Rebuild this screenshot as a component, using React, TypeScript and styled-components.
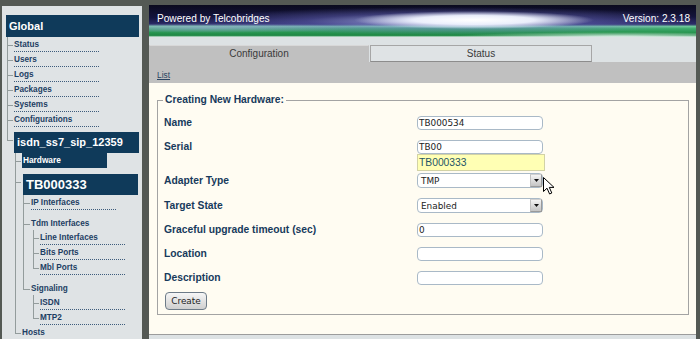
import React from 'react'
import styled, { createGlobalStyle } from 'styled-components'

type BoxKind = 'host' | 'page' | 'adapter'

const App: React.FC = () => {
  return (
    <>
      <GlobalStyle />
      <Page>
        <Sidebar>
          <GlobalBox>Global</GlobalBox>
          <Tree $offset={1}>
            <Node $indent={7} $tick={8}><Leaf href='#'>Status</Leaf></Node>
            <Node $indent={7} $tick={8}><Leaf href='#'>Users</Leaf></Node>
            <Node $indent={7} $tick={8}><Leaf href='#'>Logs</Leaf></Node>
            <Node $indent={7} $tick={8}><Leaf href='#'>Packages</Leaf></Node>
            <Node $indent={7} $tick={8}><Leaf href='#'>Systems</Leaf></Node>
            <Node $indent={7} $tick={8}><Leaf href='#'>Configurations</Leaf></Node>
            <Node $indent={7} $tick={13}>
              <NavBox $kind='host'>isdn_ss7_sip_12359</NavBox>
              <Tree $offset={1}>
                <Node $indent={7} $tick={8}>
                  <NavBox $kind='page'>Hardware</NavBox>
                </Node>
                <Node $indent={7} $tick={14}>
                  <NavBox $kind='adapter'>TB000333</NavBox>
                  <Tree $offset={1}>
                    <Node $indent={8} $tick={8}><Leaf href='#'>IP Interfaces</Leaf></Node>
                    <Node $indent={8} $tick={14}>
                      <Branch $gap={6}>Tdm Interfaces</Branch>
                      <Tree $offset={2}>
                        <Node $indent={7} $tick={8}><Leaf href='#'>Line Interfaces</Leaf></Node>
                        <Node $indent={7} $tick={8}><Leaf href='#'>Bits Ports</Leaf></Node>
                        <Node $indent={7} $tick={8}><Leaf href='#'>Mbl Ports</Leaf></Node>
                      </Tree>
                    </Node>
                    <Node $indent={8} $tick={14}>
                      <Branch $gap={6}>Signaling</Branch>
                      <Tree $offset={2}>
                        <Node $indent={7} $tick={8}><Leaf href='#'>ISDN</Leaf></Node>
                        <Node $indent={7} $tick={8}><Leaf href='#'>MTP2</Leaf></Node>
                      </Tree>
                    </Node>
                  </Tree>
                </Node>
                <Node $indent={7} $tick={8}>
                  <Branch $gap={0}>Hosts</Branch>
                </Node>
              </Tree>
            </Node>
          </Tree>
        </Sidebar>

        <Main>
          <Header>
            <HeaderText>Powered by Telcobridges</HeaderText>
            <HeaderText>Version: 2.3.18</HeaderText>
          </Header>
          <TabStrip>
            <Tab $active>Configuration</Tab>
            <Tab>Status</Tab>
          </TabStrip>
          <SubBar>
            <SubLink href='#'>List</SubLink>
          </SubBar>

          <Content>
            <Fieldset>
              <Legend>Creating New Hardware:</Legend>
              <Rows>
                <Row>
                  <Label $h={14}>Name</Label>
                  <TextInput readOnly value='TB000534' />
                </Row>
                <Row>
                  <Label $h={14}>Serial</Label>
                  <FieldWrap $extra={9}>
                    <TextInput readOnly value='TB00' />
                    <Suggestion>TB000333</Suggestion>
                  </FieldWrap>
                </Row>
                <Row>
                  <Label $h={15}>Adapter Type</Label>
                  <FieldWrap $extra={0}>
                    <SelectBox>
                      <span>TMP</span>
                      <ArrowButton><Triangle /></ArrowButton>
                    </SelectBox>
                    <Cursor width='12' height='18' viewBox='0 0 12 18'>
                      <path d='M0.5 0.5 L0.5 14.5 L4 11.2 L6.6 17 L8.8 16 L6.3 10.4 L11 10.4 Z' fill='#fff' stroke='#000' strokeWidth='1' strokeLinejoin='round' />
                    </Cursor>
                  </FieldWrap>
                </Row>
                <Row>
                  <Label $h={15}>Target State</Label>
                  <SelectBox>
                    <span>Enabled</span>
                    <ArrowButton><Triangle /></ArrowButton>
                  </SelectBox>
                </Row>
                <Row>
                  <Label $h={14}>Graceful upgrade timeout (sec)</Label>
                  <TextInput readOnly value='0' />
                </Row>
                <Row>
                  <Label $h={14}>Location</Label>
                  <TextInput readOnly value='' />
                </Row>
                <Row>
                  <Label $h={14}>Description</Label>
                  <TextInput readOnly value='' />
                </Row>
                <CreateButton type='button'>Create</CreateButton>
              </Rows>
            </Fieldset>
          </Content>
          <Footer />
        </Main>
      </Page>
    </>
  )
}

const Triangle = () => (
  <svg width='5' height='3' viewBox='0 0 5 3'>
    <polygon points='0,0 5,0 2.5,3' fill='#111' />
  </svg>
)

const GlobalStyle = createGlobalStyle`
  html, body {
    margin: 0;
    padding: 0;
    background: #545954;
    overflow: hidden;
  }
  body {
    font-family: 'Liberation Sans', Arial, sans-serif;
  }
  * {
    box-sizing: border-box;
  }
`

const Page = styled.div`
  display: flex;
  gap: 7px;
  height: 339px;
  padding: 5px 4px 0 2px;
  overflow: hidden;
`

// left navigation tree
const Sidebar = styled.div`
  width: 140px;
  flex-shrink: 0;
  margin-top: 1px;
  padding: 9px 3px 0 4px;
  background: #dfe3e5;
  overflow: hidden;
`

const GlobalBox = styled.div`
  height: 22px;
  padding-left: 3px;
  background: #0f3a5a;
  color: #fff;
  font-weight: bold;
  font-size: 11px;
  line-height: 22px;
`

const Tree = styled.ul<{ $offset: number }>`
  list-style: none;
  margin: 0 0 0 ${({ $offset }) => $offset}px;
  padding: 0;
`

const Node = styled.li<{ $indent: number; $tick: number }>`
  display: flow-root;
  position: relative;
  padding-left: ${({ $indent }) => $indent}px;

  &::before {
    content: '';
    position: absolute;
    left: 0;
    top: 0;
    width: ${({ $indent }) => $indent - 2}px;
    height: ${({ $tick }) => $tick}px;
    border-left: 1px solid #939c9c;
    border-bottom: 1px solid #939c9c;
  }

  &:not(:last-child)::after {
    content: '';
    position: absolute;
    left: 0;
    top: 0;
    bottom: 0;
    border-left: 1px solid #939c9c;
  }
`

const Leaf = styled.a`
  display: block;
  width: 85px;
  padding-top: 1px;
  line-height: 13px;
  font-size: 8.2px;
  font-weight: bold;
  color: #1d3e63;
  text-decoration: none;
  border-bottom: 1px dotted #3d5c7c;
`

const Branch = styled.span<{ $gap: number }>`
  display: block;
  padding-top: ${({ $gap }) => $gap + 1}px;
  line-height: 13px;
  font-size: 8.2px;
  font-weight: bold;
  color: #1d3e63;
`

const boxSizes: Record<BoxKind, { w: number; h: number; fs: number; pl: number; mt: number; ml: number }> = {
  host: { w: 125, h: 21, fs: 11, pl: 3, mt: 5, ml: 0 },
  page: { w: 85, h: 15, fs: 8.3, pl: 1, mt: 0, ml: 0 },
  adapter: { w: 115, h: 21, fs: 13, pl: 3, mt: 6, ml: 1 },
}

const NavBox = styled.div<{ $kind: BoxKind }>`
  width: ${({ $kind }) => boxSizes[$kind].w}px;
  height: ${({ $kind }) => boxSizes[$kind].h}px;
  margin: ${({ $kind }) => boxSizes[$kind].mt}px 0 0 ${({ $kind }) => boxSizes[$kind].ml}px;
  padding-left: ${({ $kind }) => boxSizes[$kind].pl}px;
  background: #0f3a5a;
  color: #fff;
  font-weight: bold;
  font-size: ${({ $kind }) => boxSizes[$kind].fs}px;
  line-height: ${({ $kind }) => boxSizes[$kind].h}px;
  white-space: nowrap;
`

// main panel
const Main = styled.div`
  flex: 1;
  display: flex;
  flex-direction: column;
  min-width: 0;
`

const Header = styled.div`
  height: 32px;
  display: flex;
  justify-content: space-between;
  align-items: flex-start;
  padding: 8px 6px 0 8px;
  background:
    radial-gradient(ellipse 120px 9px at 325px 15px, rgba(255, 255, 255, 1) 0%, rgba(240, 244, 255, 0.95) 50%, rgba(170, 180, 245, 0) 100%),
    radial-gradient(ellipse 260px 14px at 300px 16px, rgba(190, 200, 250, 0.85) 0%, rgba(120, 120, 210, 0.4) 55%, rgba(60, 60, 140, 0) 100%),
    radial-gradient(ellipse 150px 5px at 60px 23px, rgba(160, 160, 225, 0.6), rgba(150, 150, 220, 0) 100%),
    radial-gradient(ellipse 160px 4px at 470px 31px, rgba(230, 245, 240, 0.8), rgba(230, 245, 240, 0) 100%),
    linear-gradient(180deg, #0a0a1e 0%, #14143e 40%, #2a2a66 60%, #6ec89a 67%, #3eaa6c 74%, #27954f 86%, #1f8744 95%, #cfe6da 100%);
`

const HeaderText = styled.span`
  font-size: 10.1px;
  line-height: 12px;
  color: #fff;
`

const TabStrip = styled.div`
  height: 25px;
  display: flex;
  align-items: flex-end;
  padding-top: 8px;
  background: #dde2e4;
`

const Tab = styled.div<{ $active?: boolean }>`
  width: ${({ $active }) => ($active ? 220 : 222)}px;
  height: 17px;
  margin-left: ${({ $active }) => ($active ? 0 : 1)}px;
  background: ${({ $active }) => ($active ? '#c0c0c0' : '#dfe3e5')};
  border: 1px solid ${({ $active }) => ($active ? '#c0c0c0' : '#a6a6a6')};
  border-top-color: ${({ $active }) => ($active ? '#d8d8d8' : '#a6a6a6')};
  border-bottom-color: ${({ $active }) => ($active ? '#c0c0c0' : '#8c8c8c')};
  text-align: center;
  font-size: 10px;
  line-height: 15px;
  color: #3a3a3a;
`

const SubBar = styled.div`
  height: 21px;
  padding-left: 8px;
  background: #c0c0c0;
  line-height: 21px;
`

const SubLink = styled.a`
  font-size: 8.4px;
  color: #2b4562;
  text-decoration: underline;
`

const Content = styled.div`
  height: 251px;
  padding-top: 11px;
  background: #fffcf2;
`

const Footer = styled.div`
  flex: 1;
  border-top: 1px solid #9c9c9c;
  background: #dde2e4;
`

const Fieldset = styled.fieldset`
  margin: 0 7px 0 8px;
  padding: 0 6px 4px 6px;
  border: 1px solid #a3a3a3;
  min-width: 0;
`

const Legend = styled.legend`
  margin-left: -1px;
  padding: 0 2px;
  font-size: 10.3px;
  font-weight: bold;
  line-height: 12px;
  color: #173a5c;
`

const Rows = styled.div`
  display: flex;
  flex-direction: column;
  gap: 10px;
  margin-top: 10px;
`

const Row = styled.div`
  display: grid;
  grid-template-columns: 253px 128px;
  align-items: start;
`

const Label = styled.label<{ $h: number }>`
  font-size: 10.3px;
  font-weight: bold;
  line-height: ${({ $h }) => $h}px;
  color: #173a5c;
  white-space: nowrap;
`

const FieldWrap = styled.div<{ $extra: number }>`
  position: relative;
  padding-bottom: ${({ $extra }) => $extra}px;
`

const TextInput = styled.input`
  display: block;
  width: 126px;
  height: 14px;
  margin: 0;
  padding: 0 0 0 1px;
  border: 1px solid #a9b9c7;
  border-radius: 4px;
  background: #fff;
  font-family: 'DejaVu Sans', sans-serif;
  font-size: 8.9px;
  color: #222;
  outline: none;
`

const Suggestion = styled.div`
  position: absolute;
  top: 14px;
  left: 0;
  width: 128px;
  height: 17px;
  padding-left: 1px;
  border: 1px solid #d2d2a6;
  background: #ffffb4;
  font-size: 10.3px;
  line-height: 15px;
  color: #1f5666;
`

const SelectBox = styled.div`
  display: flex;
  align-items: center;
  width: 126px;
  height: 15px;
  padding-left: 3px;
  border: 1px solid #a9b9c7;
  border-radius: 4px;
  background: #fff;
  font-family: 'DejaVu Sans', sans-serif;
  font-size: 8.9px;
  color: #222;
`

const ArrowButton = styled.span`
  display: flex;
  align-items: center;
  justify-content: center;
  width: 12px;
  height: 13px;
  margin-left: auto;
  border: 1px solid #9a9a9a;
  border-top-color: #d0d0d0;
  border-left-color: #c0c0c0;
  background: linear-gradient(#f4f4f4, #c4c4c4);
`

const Cursor = styled.svg`
  position: absolute;
  left: 126px;
  top: 4px;
`

const CreateButton = styled.button`
  width: 42px;
  height: 18px;
  margin: -3px 0 0 1px;
  padding: 0;
  border: 1px solid #6d7b88;
  border-radius: 4px;
  background: linear-gradient(#f6f6f6, #cfcfcf);
  font-family: 'DejaVu Sans', sans-serif;
  font-size: 8.9px;
  color: #222;
`

export default App
